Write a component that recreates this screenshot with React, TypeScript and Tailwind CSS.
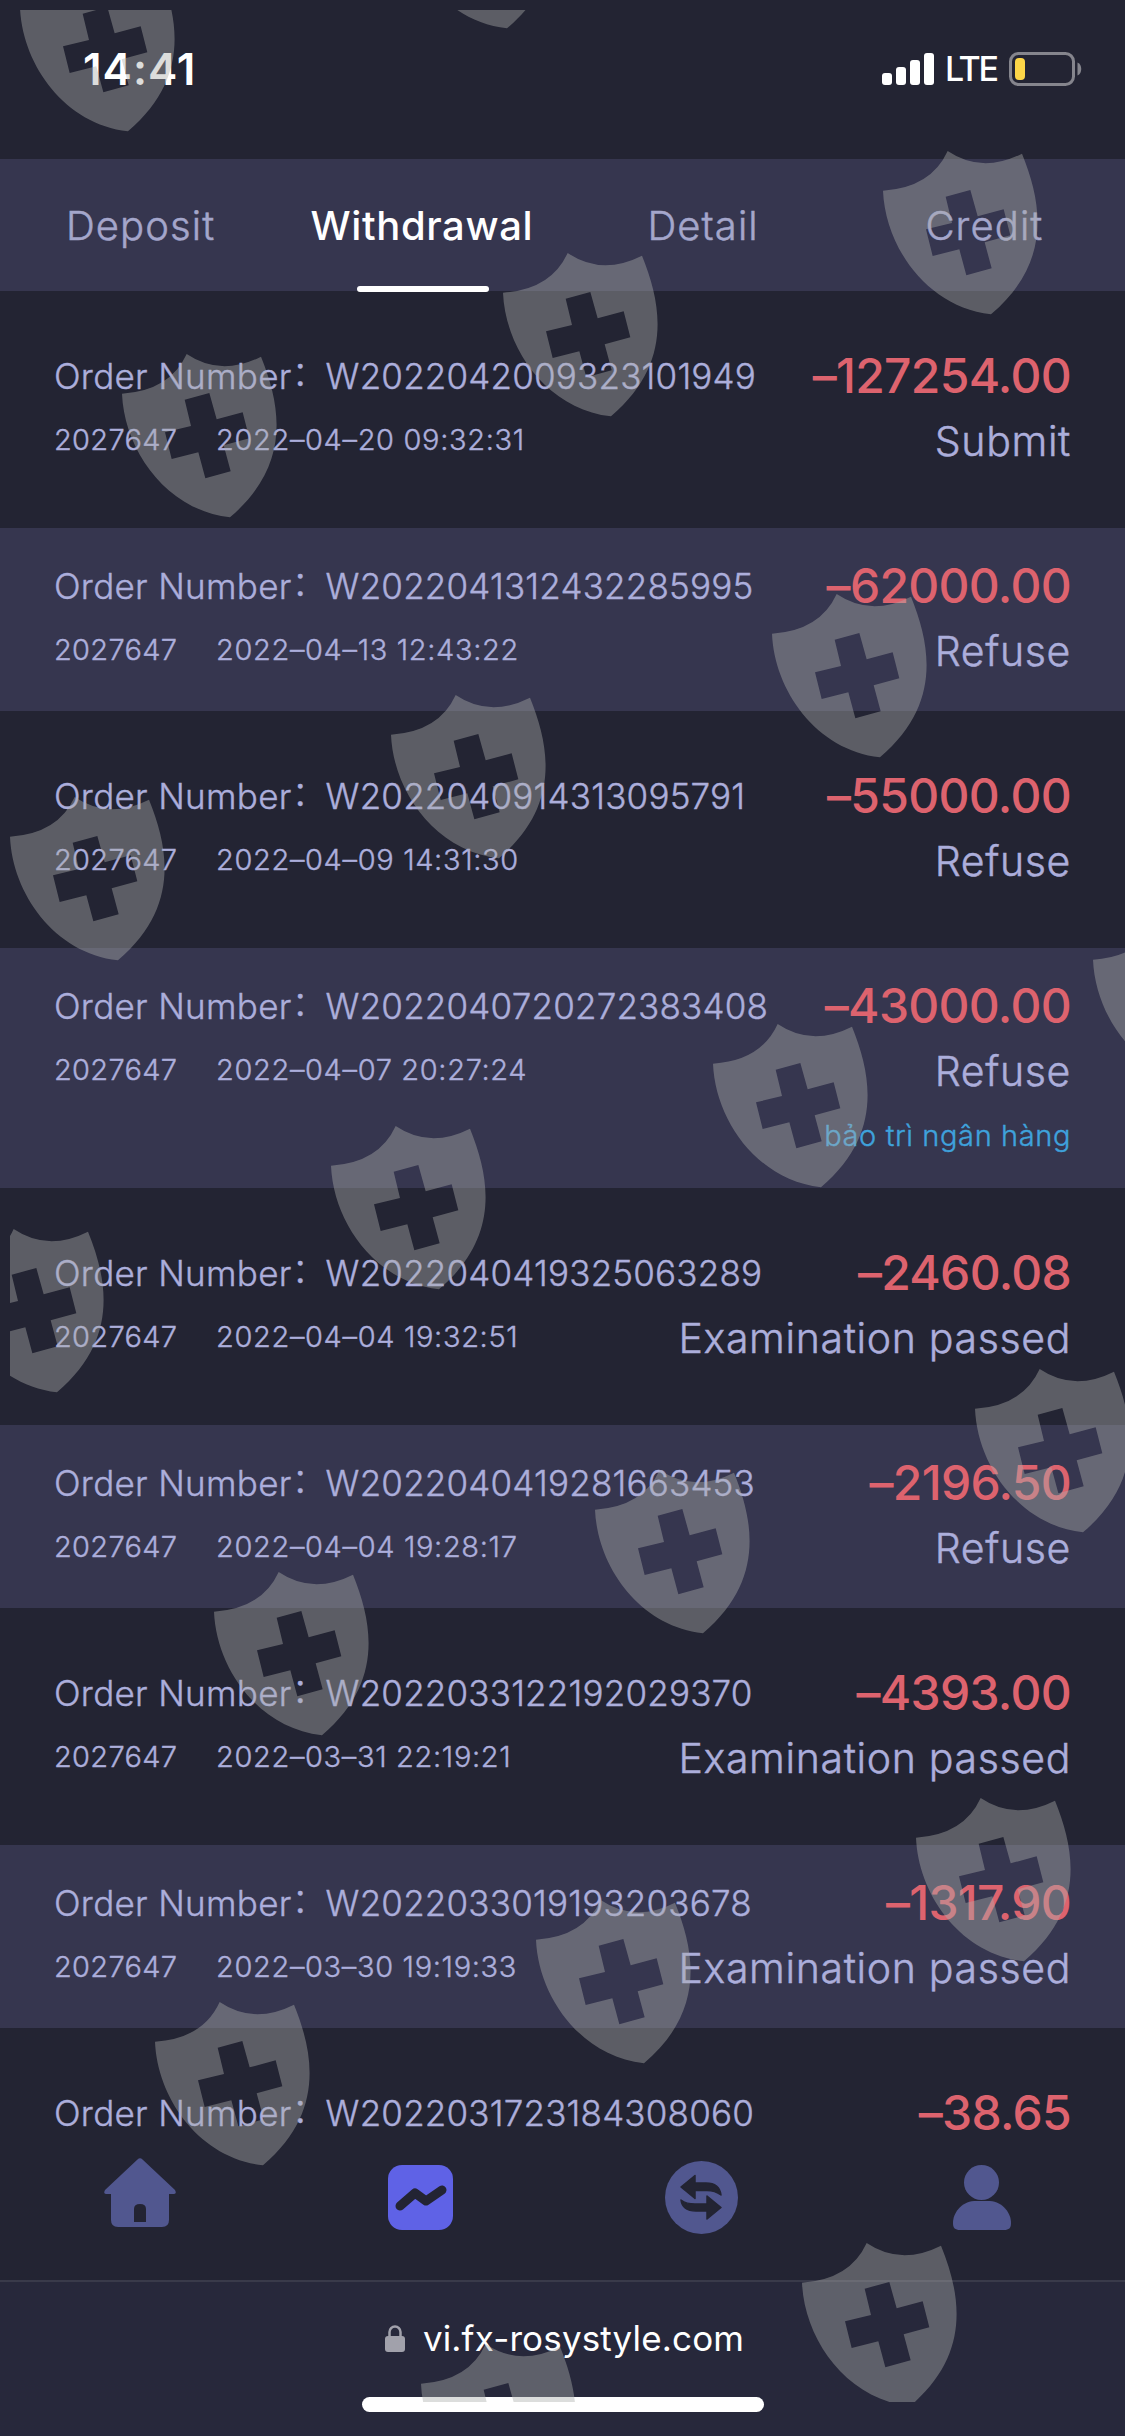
import { clsx } from "clsx";

interface Order {
  no: string;
  user?: string;
  time?: string;
  amount: string;
  status?: string;
  note?: string;
}

const tabs = ["Deposit", "Withdrawal", "Detail", "Credit"];

const orders: Order[] = [
  { no: "W2022042009323101949", user: "2027647", time: "2022–04–20 09:32:31", amount: "–127254.00", status: "Submit" },
  { no: "W2022041312432285995", user: "2027647", time: "2022–04–13 12:43:22", amount: "–62000.00", status: "Refuse" },
  { no: "W2022040914313095791", user: "2027647", time: "2022–04–09 14:31:30", amount: "–55000.00", status: "Refuse" },
  { no: "W2022040720272383408", user: "2027647", time: "2022–04–07 20:27:24", amount: "–43000.00", status: "Refuse", note: "bảo trì ngân hàng" },
  { no: "W2022040419325063289", user: "2027647", time: "2022–04–04 19:32:51", amount: "–2460.08", status: "Examination passed" },
  { no: "W2022040419281663453", user: "2027647", time: "2022–04–04 19:28:17", amount: "–2196.50", status: "Refuse" },
  { no: "W2022033122192029370", user: "2027647", time: "2022–03–31 22:19:21", amount: "–4393.00", status: "Examination passed" },
  { no: "W2022033019193203678", user: "2027647", time: "2022–03–30 19:19:33", amount: "–1317.90", status: "Examination passed" },
  { no: "W2022031723184308060", amount: "–38.65" },
];

// left / top of every watermark shield on the screen
const shields = [
  [20, -32], [399, -135], [883, 151], [503, 253], [122, 354],
  [772, 594], [391, 695], [10, 797], [1093, 920], [713, 1024],
  [331, 1126], [-51, 1229], [975, 1369], [595, 1470], [214, 1572],
  [916, 1798], [536, 1900], [155, 2002], [802, 2243], [421, 2344],
];

function StatusBar() {
  return (
    <header className="flex h-[159px] shrink-0 items-start justify-between pt-[42px] pr-[43px] pl-[83px] text-white">
      <span className="text-[44px] leading-[54px] font-semibold tracking-[1px]">14:41</span>
      <div className="flex h-[54px] items-center">
        <svg width="52" height="32" viewBox="0 0 52 32" fill="currentColor">
          <rect x="0" y="20" width="10" height="12" rx="3" />
          <rect x="14" y="14" width="10" height="18" rx="3" />
          <rect x="28" y="7" width="10" height="25" rx="3" />
          <rect x="42" y="0" width="10" height="32" rx="3" />
        </svg>
        <span className="ml-[11px] w-[52px] text-[34px] leading-none font-medium tracking-[-2.4px]">LTE</span>
        <svg className="ml-[12px]" width="73" height="34" viewBox="0 0 73 34" fill="none">
          <rect x="1.500" y="1.500" width="63" height="31" rx="8" stroke="#85858d" strokeWidth="3" />
          <path d="M68.500 10.500c5 2 5 11 0 13z" fill="#85858d" />
          <rect x="6" y="6" width="10" height="22" rx="4" fill="#fdd648" />
        </svg>
      </div>
    </header>
  );
}

function Tabs() {
  return (
    <nav className="grid h-[132px] shrink-0 grid-cols-4 bg-[#36364f]">
      {tabs.map((tab) => {
        const active = tab === "Withdrawal";
        return (
          <div key={tab} className="flex flex-col items-center justify-between">
            <span
              className={clsx(
                "text-[40px] leading-[133px] whitespace-nowrap",
                active
                  ? "h-[126px] font-medium tracking-[0.6px] text-white"
                  : "font-light tracking-[1.1px] text-[#a4a6cb] [-webkit-text-stroke:0.5px]",
              )}
            >
              {tab}
            </span>
            {active && <i className="ml-[2px] h-[6px] w-[132px] shrink-0 rounded-full bg-white" />}
          </div>
        );
      })}
    </nav>
  );
}

function OrderRow({ order, striped }: { order: Order; striped: boolean }) {
  return (
    <li
      className={clsx(
        "flex shrink-0 justify-between pr-[55px] pl-[54px]",
        striped ? "bg-[#36364f] pt-[31px]" : "pt-[58px]",
        striped ? (order.note ? "h-[240px]" : "h-[183px]") : "h-[237px]",
      )}
    >
      <div className="flex flex-col font-light whitespace-nowrap text-[#acaedb] [-webkit-text-stroke:0.4px]">
        <p className="flex text-[35px] leading-[54px]">
          <span className="tracking-[0.3px]">Order Number</span>
          <span className="relative -top-[3px] w-[34px]">：</span>
          <span className="tracking-[0.2px]">{order.no}</span>
        </p>
        {order.time && (
          <p className="mt-[14px] flex text-[29px] leading-[46px]">
            <span className="w-[162px] tracking-[0.3px]">{order.user}</span>
            <span className="tracking-[0.65px]">{order.time}</span>
          </p>
        )}
      </div>
      <div className="flex w-0 flex-col items-end whitespace-nowrap">
        <b className="-mr-[1px] text-[48px] leading-[54px] font-medium tracking-[-0.7px] text-[#dd636e]">{order.amount}</b>
        {order.status && (
          <span className="-mr-[1px] mt-[11px] text-[41px] leading-[54px] font-light tracking-[0.65px] text-[#acaedb] [-webkit-text-stroke:0.5px]">
            {order.status}
          </span>
        )}
        {order.note && (
          <span className="-mr-[1px] mt-[15px] text-[29px] leading-[46px] font-light tracking-[0.6px] text-[#3fa2dc] [-webkit-text-stroke:0.4px]">
            {order.note}
          </span>
        )}
      </div>
    </li>
  );
}

function BottomNav() {
  return (
    <nav className="grid h-[149px] shrink-0 grid-cols-4 justify-items-center pt-[27px] pr-[3px] text-[#51578f]">
      <svg width="72" height="70" viewBox="0 0 72 70" fill="currentColor">
        <path fillRule="evenodd" d="M33.500 1.500q2.500-2.500 5 0L71 32q2 4-1 4h-5v26q0 7-7 7H14q-7 0-7-7V36H2q-3 0-1-4zM30 64h12V51q0-5-6-5t-6 5z" />
      </svg>
      <svg className="mt-[7px]" width="65" height="65" viewBox="0 0 65 65">
        <rect width="65" height="65" rx="14" fill="#5f62e6" />
        <path d="M12 41 27 28 38 36 54 25" fill="none" stroke="#232433" strokeWidth="9" strokeLinecap="round" strokeLinejoin="round" />
      </svg>
      <svg className="mt-[3px]" width="73" height="73" viewBox="0 0 73 73">
        <circle cx="36.500" cy="36.500" r="36.500" fill="currentColor" />
        <g fill="#232433" stroke="#232433" strokeWidth="1.500" strokeLinejoin="round">
          <path d="M16 26 30 14.500V22h11c9 0 14 4 15 12-4-3-8-4.500-14-4.500H30v8z" />
          <path d="M56 46.500 42 58v-8H31c-9 0-14-3-15-11 4 3 8 4 14 4h12v-8z" />
        </g>
      </svg>
      <svg className="mt-[7px] ml-px" width="58" height="65" viewBox="0 0 58 65" fill="currentColor">
        <circle cx="28.500" cy="17.500" r="17.500" />
        <path d="M21 36h16c13 1 21 12 21 22 0 5-2 7-7 7H7c-5 0-7-2-7-7 0-10 8-21 21-22z" />
      </svg>
    </nav>
  );
}

function AddressBar() {
  return (
    <footer className="flex h-[156px] shrink-0 flex-col items-center border-t-2 border-[#393a4a] bg-[#27283b]">
      <div className="mt-[31px] flex h-[50px] items-center">
        <svg className="mr-[18px]" width="20" height="28" viewBox="0 0 20 28">
          <path d="M4.500 13V8a5.500 5.500 0 0 1 11 0v5" fill="none" stroke="#a1a1ab" strokeWidth="2.500" />
          <rect y="12" width="20" height="16" rx="3" fill="#a1a1ab" />
        </svg>
        <span className="-mr-[4px] text-[35px] leading-[50px] tracking-[0.15px] text-white">vi.fx-rosystyle.com</span>
      </div>
      <i className="mt-[34px] h-[15px] w-[402px] rounded-full bg-white" />
    </footer>
  );
}

function Watermark() {
  return (
    <div className="pointer-events-none absolute top-[10px] right-0 bottom-[34px] left-[10px] overflow-hidden">
      {shields.map(([x, y]) => (
        <svg
          key={`${x}:${y}`}
          className="absolute h-[164px] w-[156px]"
          style={{ left: x - 10, top: y - 10 }}
          viewBox="0 0 468 492"
          fill="#abaeac"
          fillOpacity="0.42"
        >
          <path
            fillRule="evenodd"
            d="M0 119Q144 110 194 0 296 69 417 8C482 168 502 338 324 490 132 468 7 288 0 119ZM188 137 262 117 284 196 362 175 382 253 305 274 326 352 250 373 229 295 149 315 129 235 207 216Z"
          />
        </svg>
      ))}
    </div>
  );
}

export default function App() {
  return (
    <div className="relative flex h-[2436px] w-[1125px] flex-col overflow-hidden bg-[#232433] font-[Inter,'Noto_Sans_CJK_SC',sans-serif]">
      <StatusBar />
      <Tabs />
      <ul className="flex h-[1840px] shrink-0 flex-col">
        {orders.map((order, i) => (
          <OrderRow key={order.no} order={order} striped={i % 2 === 1} />
        ))}
      </ul>
      <BottomNav />
      <AddressBar />
      <Watermark />
    </div>
  );
}
